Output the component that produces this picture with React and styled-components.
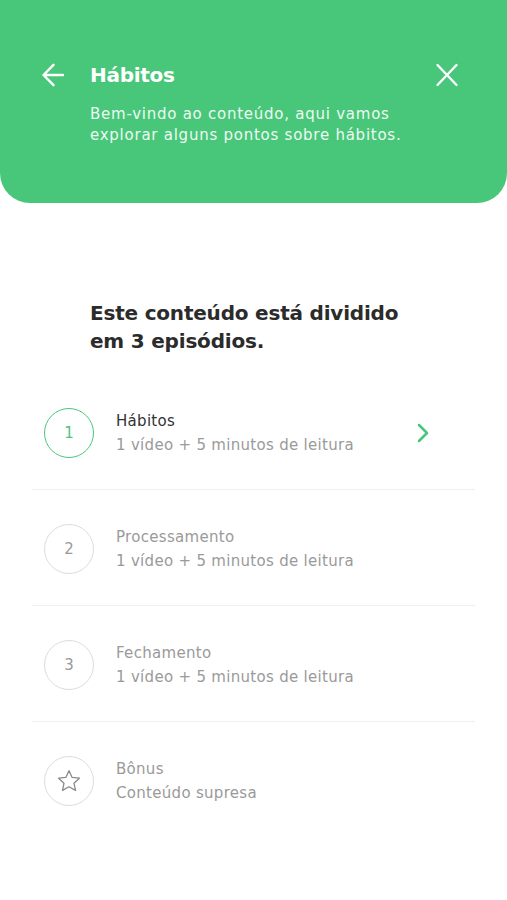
import React from 'react';
import styled, { createGlobalStyle } from 'styled-components';

const GlobalStyle = createGlobalStyle`
  body {
    margin: 0;
    background: #fff;
    font-family: "DejaVu Sans", "Noto Sans", sans-serif;
  }
`;

const episodes = [
  { id: 1, title: 'Hábitos', info: '1 vídeo + 5 minutos de leitura', active: true },
  { id: 2, title: 'Processamento', info: '1 vídeo + 5 minutos de leitura' },
  { id: 3, title: 'Fechamento', info: '1 vídeo + 5 minutos de leitura' },
  { id: 'star', title: 'Bônus', info: 'Conteúdo supresa', last: true },
];

export default function App() {
  return (
    <Page>
      <GlobalStyle />
      <Header>
        <TopRow>
          <IconButton>
            <svg width="26" height="26" viewBox="0 0 26 26" fill="none" stroke="#fff" strokeWidth="2.4" strokeLinecap="round" strokeLinejoin="round">
              <path d="M23 13H3.5M13.5 2.8L3.5 13l10 10.2" />
            </svg>
          </IconButton>
          <Title>Hábitos</Title>
          <CloseButton>
            <svg width="24" height="24" viewBox="0 0 24 24" fill="none" stroke="#fff" strokeWidth="2.4" strokeLinecap="round">
              <path d="M2.5 2l19 20M21.5 2l-19 20" />
            </svg>
          </CloseButton>
        </TopRow>
        <Intro>
          Bem-vindo ao conteúdo, aqui vamos
          <br />
          explorar alguns pontos sobre hábitos.
        </Intro>
      </Header>

      <Content>
        <Heading>
          Este conteúdo está dividido
          <br />
          em 3 episódios.
        </Heading>
        <List>
          {episodes.map((ep) => (
            <Item key={ep.id} last={ep.last}>
              <Circle active={ep.active}>
                {ep.id === 'star' ? (
                  <svg width="26" height="26" viewBox="0 0 24 24" fill="none" stroke="#8a8a8a" strokeWidth="1.2" strokeLinejoin="round">
                    <path d="M12 2.5l2.9 6.2 6.7.7-5 4.6 1.4 6.7L12 17.3l-6 3.4 1.4-6.7-5-4.6 6.7-.7z" />
                  </svg>
                ) : (
                  ep.id
                )}
              </Circle>
              <Texts>
                <ItemTitle active={ep.active}>{ep.title}</ItemTitle>
                <ItemInfo>{ep.info}</ItemInfo>
              </Texts>
              {ep.active && (
                <Chevron>
                  <svg width="14" height="22" viewBox="0 0 14 22" fill="none" stroke="#48c77a" strokeWidth="2.5" strokeLinecap="round" strokeLinejoin="round">
                    <path d="M3 3l8 8-8 8" />
                  </svg>
                </Chevron>
              )}
            </Item>
          ))}
        </List>
      </Content>
    </Page>
  );
}

const Page = styled.div`
  width: 507px;
  min-height: 900px;
  background: #fff;
`;

const Header = styled.header`
  background: #48c77a;
  height: 203px;
  box-sizing: border-box;
  padding: 62px 48px 0 40px;
  border-radius: 0 0 30px 30px;
  color: #fff;
`;

const TopRow = styled.div`
  display: flex;
  align-items: center;
  height: 26px;
`;

const IconButton = styled.div`
  width: 26px;
  height: 26px;
  margin-right: 24px;
  display: flex;
`;

const CloseButton = styled.div`
  margin-left: auto;
  width: 24px;
  height: 24px;
  display: flex;
`;

const Title = styled.h1`
  margin: 0;
  font-size: 20px;
  font-weight: 700;
  letter-spacing: -0.3px;
`;

const Intro = styled.p`
  margin: 16px 0 0 50px;
  font-size: 15px;
  line-height: 21px;
  letter-spacing: 0.75px;
  color: #eef9f2;
`;

const Content = styled.main`
  padding: 96px 32px 0;
`;

const Heading = styled.h2`
  margin: 0 0 19px 58px;
  font-size: 20px;
  line-height: 28px;
  font-weight: 700;
  letter-spacing: -0.2px;
  color: #2b2b2b;
`;

const List = styled.ul`
  list-style: none;
  margin: 0;
  padding: 0;
`;

const Item = styled.li`
  display: flex;
  align-items: center;
  height: 116px;
  padding: 2px 12px 0;
  box-sizing: border-box;
  border-bottom: 1px solid ${(p) => (p.last ? 'transparent' : '#efefef')};
`;

const Circle = styled.div`
  flex: none;
  width: 48px;
  height: 48px;
  border-radius: 50%;
  border: 1.5px solid ${(p) => (p.active ? '#48c77a' : '#dcdcdc')};
  display: flex;
  align-items: center;
  justify-content: center;
  font-size: 15px;
  color: ${(p) => (p.active ? '#48c77a' : '#9a9a9a')};
`;

const Texts = styled.div`
  margin-left: 22px;
  display: flex;
  flex-direction: column;
  flex: 1;
  letter-spacing: 0.3px;
`;

const ItemTitle = styled.div`
  font-size: 15px;
  line-height: 24px;
  color: ${(p) => (p.active ? '#333' : '#9a9a9a')};
`;

const ItemInfo = styled.div`
  font-size: 15px;
  line-height: 24px;
  color: #9a9a9a;
`;

const Chevron = styled.div`
  display: flex;
  margin-right: 33px;
`;
